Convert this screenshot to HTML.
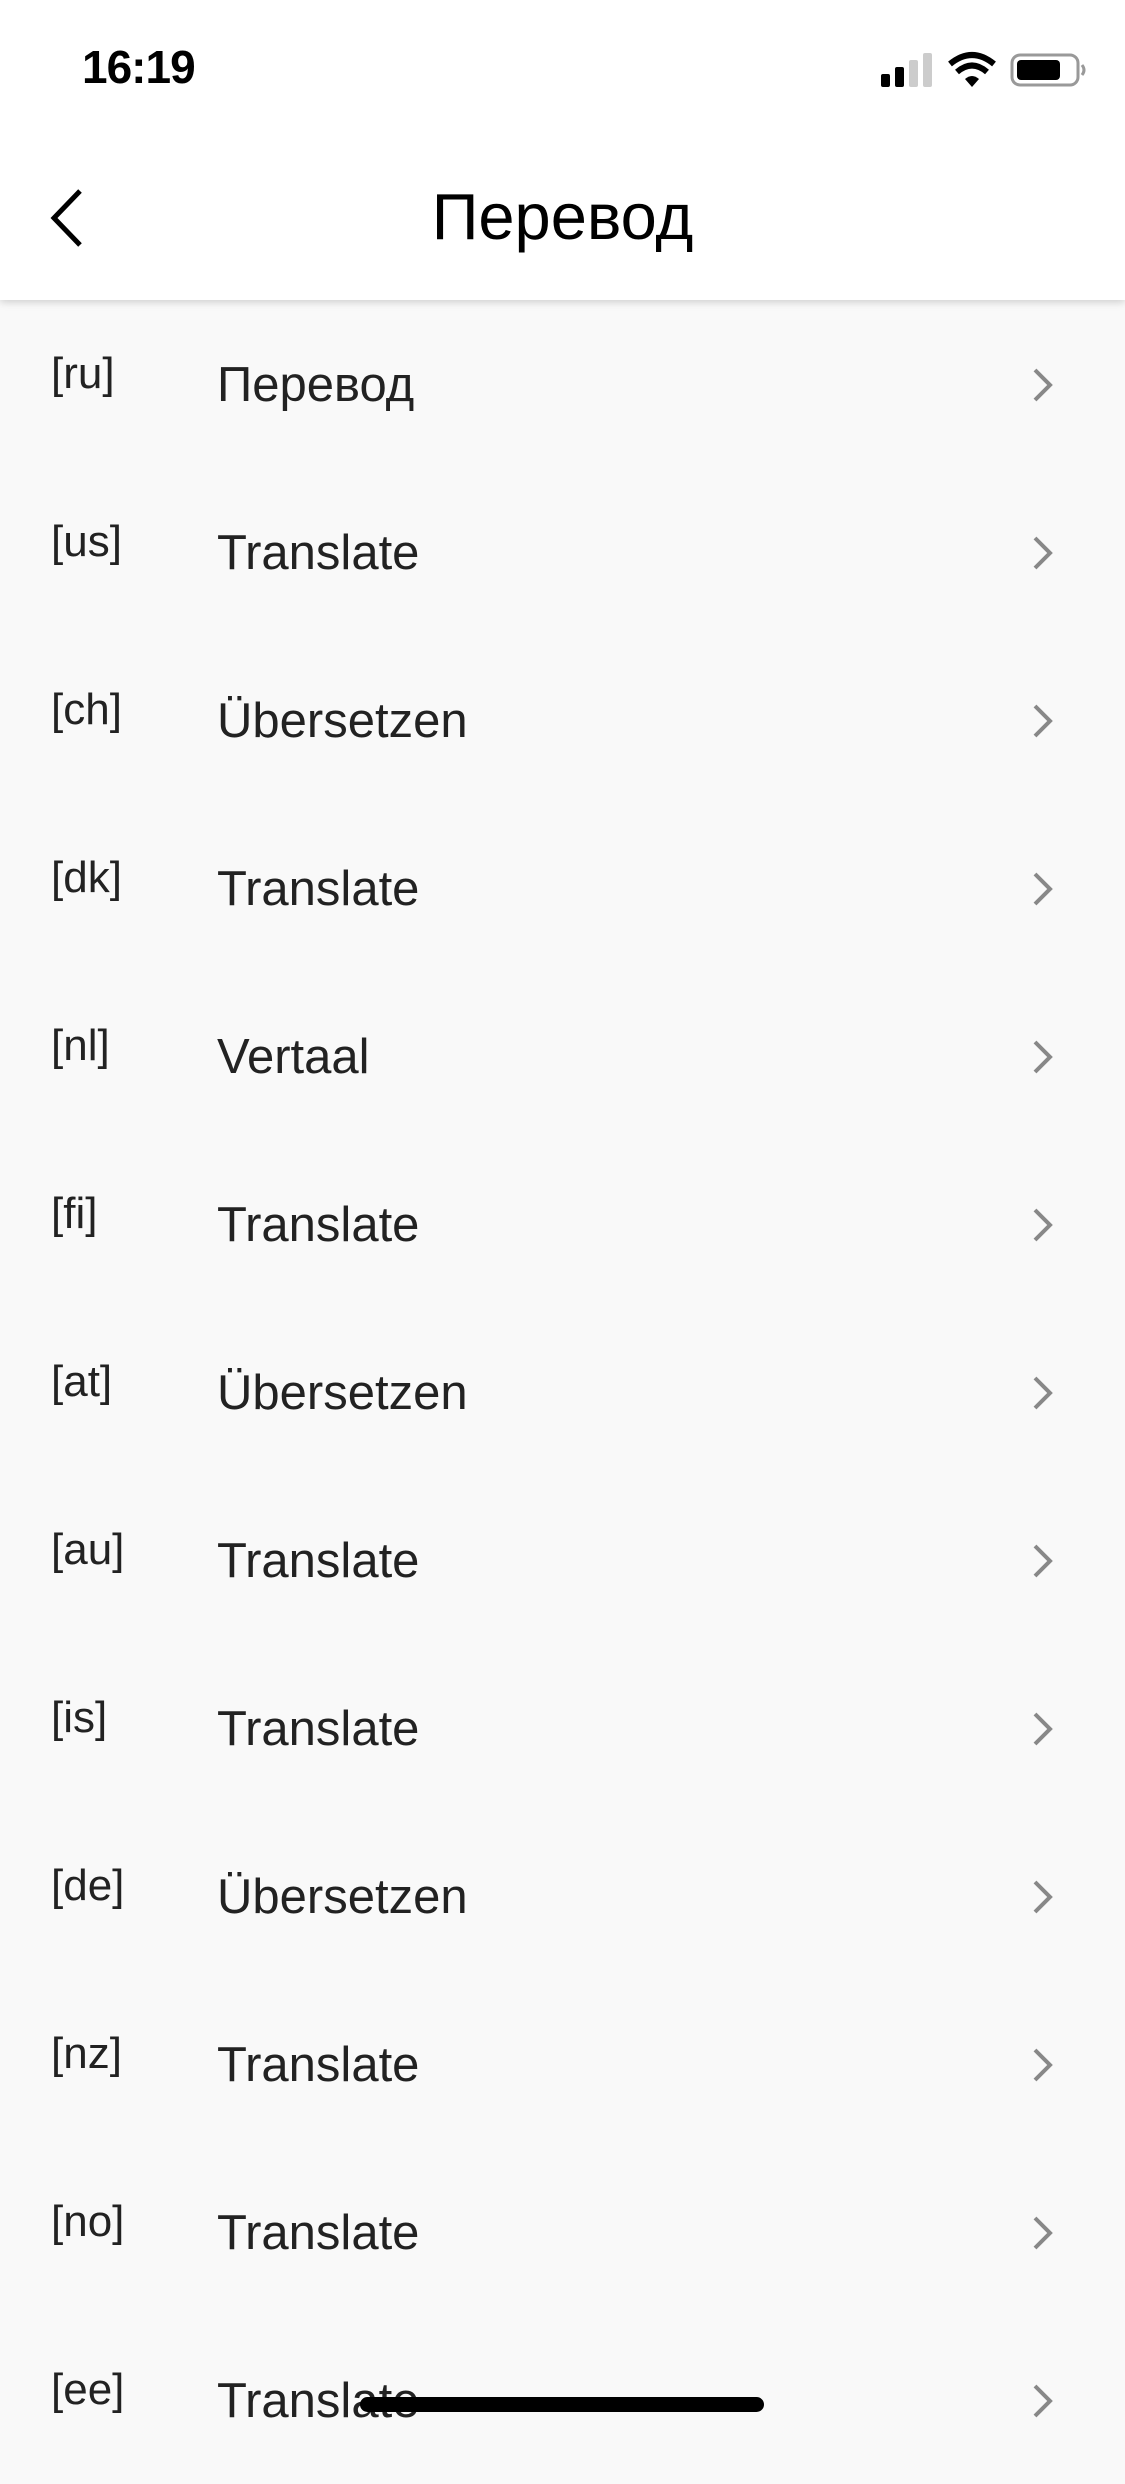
<!DOCTYPE html>
<html><head><meta charset="utf-8"><style>
html,body{margin:0;padding:0;width:1125px;height:2436px;overflow:hidden;background:#f9f9f9;font-family:"Liberation Sans",sans-serif}
.hdr{position:absolute;left:0;top:0;width:1125px;height:300px;background:#fff;box-shadow:0 2px 8px rgba(0,0,0,0.18);z-index:2}
.time{position:absolute;left:82px;top:40px;font-size:46px;font-weight:bold;color:#000;letter-spacing:-1px}
.title{position:absolute;left:0;width:1125px;top:179px;text-align:center;font-size:65px;color:#000}
.row{position:absolute;left:0;width:1125px;height:168px}
.code{position:absolute;left:51px;top:49px;font-size:44px;color:#222}
.txt{position:absolute;left:217px;top:57px;font-size:49px;color:#222}
.chev{position:absolute;left:1030px;top:67px}
.home{position:absolute;left:360px;top:2397px;width:404px;height:15px;border-radius:8px;background:#000}
</style></head><body>
<div class="hdr">
<div class="time">16:19</div>
<svg style="position:absolute;left:880px;top:50px" width="210" height="40" viewBox="0 0 210 40">
<rect x="1" y="24" width="9" height="13" rx="2" fill="#000"/>
<rect x="15" y="17" width="9" height="20" rx="2" fill="#000"/>
<rect x="29" y="10" width="9" height="27" rx="2" fill="#ccc"/>
<rect x="43" y="3" width="9" height="34" rx="2" fill="#ccc"/>
<path d="M70 14 Q92 -4 114 14" stroke="#000" stroke-width="6" fill="none"/>
<path d="M77 22 Q92 9 107 22" stroke="#000" stroke-width="6" fill="none"/>
<path d="M85 29 L92 37 L99 29 Q92 23 85 29Z" fill="#000"/>
<rect x="132" y="5" width="66" height="30" rx="8" fill="none" stroke="#999" stroke-width="3"/>
<rect x="137" y="10" width="43" height="20" rx="4" fill="#000"/>
<path d="M202 15 Q206 20 202 25" stroke="#999" stroke-width="3" fill="none"/>
</svg>
<svg style="position:absolute;left:46px;top:188px" width="40" height="60" viewBox="0 0 40 60"><path d="M34 3 L8 30 L34 57" stroke="#000" stroke-width="5" fill="none"/></svg>
<div class="title">Перевод</div>
</div>
<div class="row" style="top:300px"><div class="code">[ru]</div><div class="txt">Перевод</div><svg class="chev" width="26" height="36" viewBox="0 0 26 36"><path d="M5 3 L20 18 L5 33" stroke="#888" stroke-width="4" fill="none"/></svg></div>
<div class="row" style="top:468px"><div class="code">[us]</div><div class="txt">Translate</div><svg class="chev" width="26" height="36" viewBox="0 0 26 36"><path d="M5 3 L20 18 L5 33" stroke="#888" stroke-width="4" fill="none"/></svg></div>
<div class="row" style="top:636px"><div class="code">[ch]</div><div class="txt">Übersetzen</div><svg class="chev" width="26" height="36" viewBox="0 0 26 36"><path d="M5 3 L20 18 L5 33" stroke="#888" stroke-width="4" fill="none"/></svg></div>
<div class="row" style="top:804px"><div class="code">[dk]</div><div class="txt">Translate</div><svg class="chev" width="26" height="36" viewBox="0 0 26 36"><path d="M5 3 L20 18 L5 33" stroke="#888" stroke-width="4" fill="none"/></svg></div>
<div class="row" style="top:972px"><div class="code">[nl]</div><div class="txt">Vertaal</div><svg class="chev" width="26" height="36" viewBox="0 0 26 36"><path d="M5 3 L20 18 L5 33" stroke="#888" stroke-width="4" fill="none"/></svg></div>
<div class="row" style="top:1140px"><div class="code">[fi]</div><div class="txt">Translate</div><svg class="chev" width="26" height="36" viewBox="0 0 26 36"><path d="M5 3 L20 18 L5 33" stroke="#888" stroke-width="4" fill="none"/></svg></div>
<div class="row" style="top:1308px"><div class="code">[at]</div><div class="txt">Übersetzen</div><svg class="chev" width="26" height="36" viewBox="0 0 26 36"><path d="M5 3 L20 18 L5 33" stroke="#888" stroke-width="4" fill="none"/></svg></div>
<div class="row" style="top:1476px"><div class="code">[au]</div><div class="txt">Translate</div><svg class="chev" width="26" height="36" viewBox="0 0 26 36"><path d="M5 3 L20 18 L5 33" stroke="#888" stroke-width="4" fill="none"/></svg></div>
<div class="row" style="top:1644px"><div class="code">[is]</div><div class="txt">Translate</div><svg class="chev" width="26" height="36" viewBox="0 0 26 36"><path d="M5 3 L20 18 L5 33" stroke="#888" stroke-width="4" fill="none"/></svg></div>
<div class="row" style="top:1812px"><div class="code">[de]</div><div class="txt">Übersetzen</div><svg class="chev" width="26" height="36" viewBox="0 0 26 36"><path d="M5 3 L20 18 L5 33" stroke="#888" stroke-width="4" fill="none"/></svg></div>
<div class="row" style="top:1980px"><div class="code">[nz]</div><div class="txt">Translate</div><svg class="chev" width="26" height="36" viewBox="0 0 26 36"><path d="M5 3 L20 18 L5 33" stroke="#888" stroke-width="4" fill="none"/></svg></div>
<div class="row" style="top:2148px"><div class="code">[no]</div><div class="txt">Translate</div><svg class="chev" width="26" height="36" viewBox="0 0 26 36"><path d="M5 3 L20 18 L5 33" stroke="#888" stroke-width="4" fill="none"/></svg></div>
<div class="row" style="top:2316px"><div class="code">[ee]</div><div class="txt">Translate</div><svg class="chev" width="26" height="36" viewBox="0 0 26 36"><path d="M5 3 L20 18 L5 33" stroke="#888" stroke-width="4" fill="none"/></svg></div>
<div class="home"></div>
</body></html>
